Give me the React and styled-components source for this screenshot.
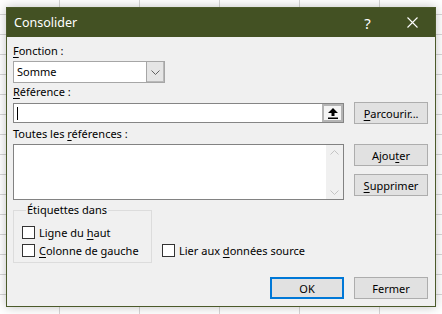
import styled, { createGlobalStyle } from 'styled-components';

const font = `"Noto Sans", "Segoe UI", sans-serif`;

const GlobalStyle = createGlobalStyle`
    html, body {
        margin: 0;
        height: 100%;
    }
    body {
        background-color: #fff;
        background-image:
            linear-gradient(to right, #d6d6d6 1px, transparent 1px),
            linear-gradient(to bottom, #d6d6d6 1px, transparent 1px);
        background-size: 80px 100%, 100% 20px;
        background-position: 59px 0, 0 14px;
        font-family: ${font};
    }
`;

const Page = styled.div`
    padding: 7px 0 0 6px;
`;

const Dialog = styled.div`
    width: 430px;
    height: 300px;
    box-sizing: border-box;
    border: 1px solid #4b5a2a;
    background: #f0f0f0;
    box-shadow: 0 0 10px rgba(0, 0, 0, 0.25);
    display: flex;
    flex-direction: column;
`;

const TitleBar = styled.div`
    height: 29px;
    background: #435123;
    color: #fff;
    display: flex;
    align-items: center;
    padding-left: 7px;
    font-size: 12.5px;

    .title {
        flex: 1;
    }
`;

const TitleButton = styled.div`
    width: 45px;
    height: 29px;
    display: flex;
    align-items: center;
    justify-content: center;
    font-size: 15px;
`;

const Body = styled.div`
    padding: 6px 7px 0 6px;
    display: flex;
    flex-direction: column;
    font-size: 11px;
    color: #000;

    u {
        text-underline-offset: 2px;
    }
`;

const Label = styled.div`
    line-height: 16px;
    margin-top: ${p => p.$mt || 0}px;
    margin-bottom: ${p => p.$mb || 0}px;
    white-space: nowrap;
`;

const Select = styled.div`
    width: 152px;
    height: 22px;
    box-sizing: border-box;
    border: 1px solid #a6a6a6;
    background: #fff;
    display: flex;
    align-items: stretch;

    .value {
        flex: 1;
        padding-left: 3px;
        line-height: 20px;
    }
    .drop {
        width: 17px;
        background: #e5e5e5;
        border-left: 1px solid #a6a6a6;
        box-shadow: inset 0 -1px 0 #b9b9b9, inset -1px 0 0 #b9b9b9;
        display: flex;
        align-items: center;
        justify-content: center;
    }
`;

const Row = styled.div`
    display: flex;
    gap: 10px;
    align-items: ${p => p.$align || 'flex-start'};
`;

const RefInput = styled.div`
    width: 332px;
    height: 20px;
    box-sizing: border-box;
    border: 1px solid #858585;
    background: #fff;
    display: flex;
    align-items: center;
    justify-content: space-between;
    padding-left: 3px;

    .caret {
        width: 1px;
        height: 13px;
        background: #000;
    }
    .collapse {
        width: 21px;
        height: 18px;
        box-sizing: border-box;
        border: 2px solid #b4b4b4;
        background: #f4f4f4;
        display: flex;
        align-items: center;
        justify-content: center;
    }
`;

const Button = styled.div`
    width: 74px;
    height: 22px;
    box-sizing: border-box;
    border: ${p => (p.$default ? '2px solid #0078d7' : '1px solid #adadad')};
    background: #e1e1e1;
    display: flex;
    align-items: center;
    justify-content: center;
    white-space: nowrap;
`;

const ListBox = styled.div`
    width: 332px;
    height: 56px;
    box-sizing: border-box;
    border: 1px solid #828282;
    background: #fff;
    display: flex;
    justify-content: flex-end;

    .scroll {
        width: 17px;
        background: #f0f0f0;
        display: flex;
        flex-direction: column;
        justify-content: space-between;
        align-items: center;
        padding: 5px 0 4px;
    }
`;

const ButtonStack = styled.div`
    display: flex;
    flex-direction: column;
    gap: 8px;
`;

const Options = styled.div`
    display: flex;
    align-items: flex-end;
    margin-top: 2px;
`;

const GroupBox = styled.fieldset`
    width: 139px;
    box-sizing: border-box;
    margin: 0;
    padding: 5px 0 3px 8px;
    border: 1px solid #dcdcdc;

    legend {
        padding: 0 1px;
        margin-left: 4px;
        line-height: 16px;
    }
`;

const Check = styled.label`
    height: 18px;
    display: flex;
    align-items: center;
    gap: 4px;
    white-space: nowrap;
    margin-left: ${p => p.$ml || 0}px;
    margin-bottom: ${p => p.$mb || 0}px;

    .box {
        width: 13px;
        height: 13px;
        box-sizing: border-box;
        border: 1px solid #333;
        background: #fff;
    }
`;

const Footer = styled.div`
    display: flex;
    justify-content: flex-end;
    gap: 10px;
    margin-top: 14px;
`;

function Chevron({ up, color = '#606060' }) {
    return (
        <svg width="9" height="5" viewBox="0 0 9 5">
            <polyline
                points={up ? '0.5,4.5 4.5,0.5 8.5,4.5' : '0.5,0.5 4.5,4.5 8.5,0.5'}
                fill="none"
                stroke={color}
                strokeWidth="1"
            />
        </svg>
    );
}

function CheckOption({ children, ...rest }) {
    return (
        <Check {...rest}>
            <span className="box" />
            <span>{children}</span>
        </Check>
    );
}

export default function App() {
    return (
        <>
            <GlobalStyle />
            <Page>
                <Dialog>
                    <TitleBar>
                        <span className="title">Consolider</span>
                        <TitleButton>?</TitleButton>
                        <TitleButton>
                            <svg width="11" height="11" viewBox="0 0 11 11">
                                <path d="M0.5 0.5 L10.5 10.5 M10.5 0.5 L0.5 10.5" stroke="#fff" strokeWidth="1.1" />
                            </svg>
                        </TitleButton>
                    </TitleBar>
                    <Body>
                        <Label $mb={2}><u>F</u>onction :</Label>
                        <Select>
                            <span className="value">Somme</span>
                            <span className="drop"><Chevron /></span>
                        </Select>
                        <Label $mt={1} $mb={2}><u>R</u>éférence :</Label>
                        <Row $align="center">
                            <RefInput>
                                <span className="caret" />
                                <span className="collapse">
                                    <svg width="10" height="11" viewBox="0 0 10 11">
                                        <path d="M5 0 L10 5 L6.5 5 L6.5 8 L3.5 8 L3.5 5 L0 5 Z" fill="#000" />
                                        <rect x="0" y="9.5" width="10" height="1.5" fill="#000" />
                                    </svg>
                                </span>
                            </RefInput>
                            <Button><u>P</u>arcourir...</Button>
                        </Row>
                        <Label $mt={2} $mb={2}>Toutes les <u>r</u>éférences :</Label>
                        <Row>
                            <ListBox>
                                <div className="scroll">
                                    <Chevron up color="#c4c4c4" />
                                    <Chevron color="#c4c4c4" />
                                </div>
                            </ListBox>
                            <ButtonStack>
                                <Button>Ajou<u>t</u>er</Button>
                                <Button><u>S</u>upprimer</Button>
                            </ButtonStack>
                        </Row>
                        <Options>
                            <GroupBox>
                                <legend>Étiquettes dans</legend>
                                <CheckOption>Ligne du <u>h</u>aut</CheckOption>
                                <CheckOption><u>C</u>olonne de gauche</CheckOption>
                            </GroupBox>
                            <CheckOption $ml={10} $mb={4}>Lier aux <u>d</u>onnées source</CheckOption>
                        </Options>
                        <Footer>
                            <Button $default>OK</Button>
                            <Button>Fermer</Button>
                        </Footer>
                    </Body>
                </Dialog>
            </Page>
        </>
    );
}
